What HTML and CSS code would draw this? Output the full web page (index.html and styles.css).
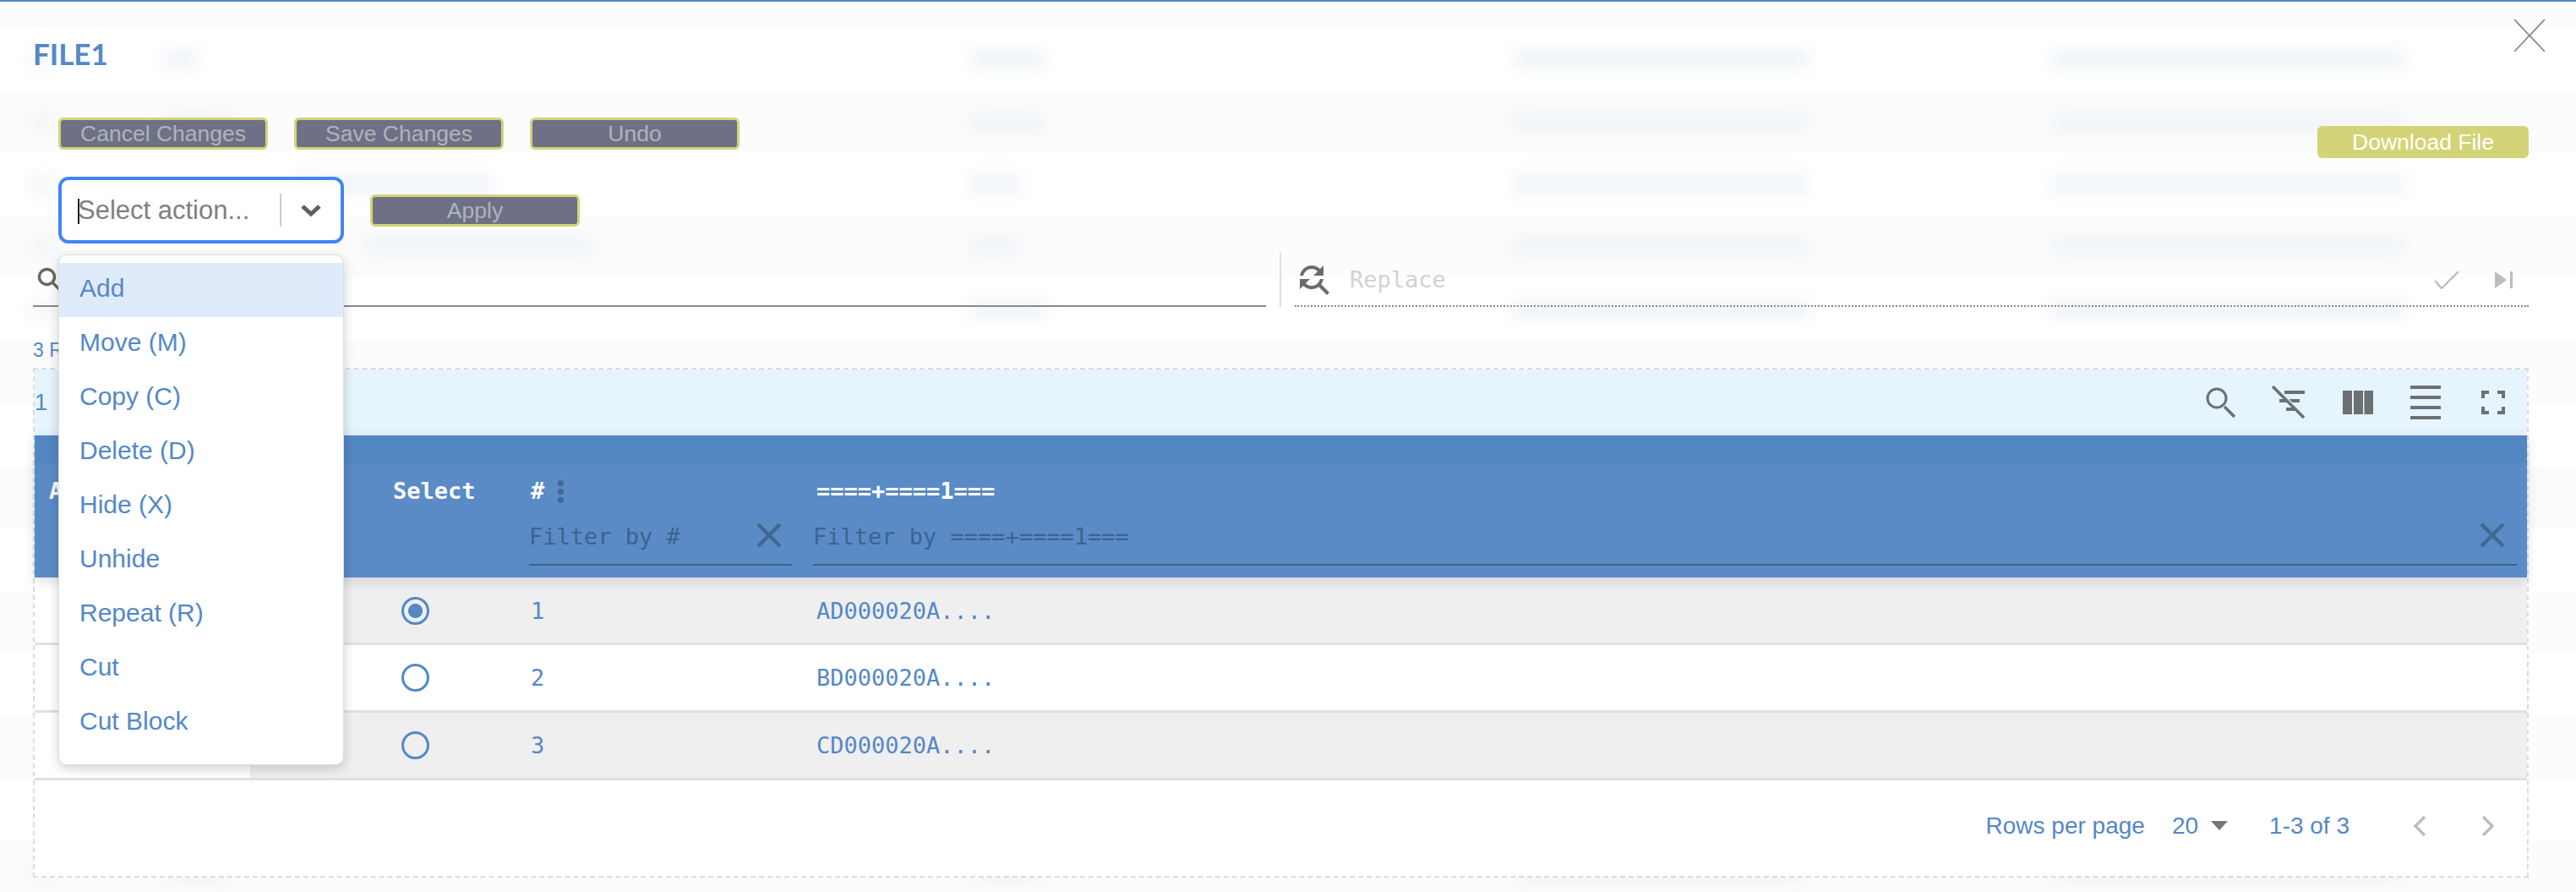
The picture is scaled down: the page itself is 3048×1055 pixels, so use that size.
FILE: index.html
```html
<!DOCTYPE html>
<html lang="en">
<head>
<meta charset="utf-8">
<title>FILE1</title>
<link rel="stylesheet" href="styles.css">
</head>
<body>
<div class="ghost" aria-hidden="true">
  <div class="g-head"></div>
  <div class="g-row"><i class="b c1"></i><i class="b w40"></i><i class="b w90"></i><i class="b w350"></i><i class="b w418"></i></div>
  <div class="g-row alt"><i class="b c1"></i><i class="b w80"></i><i class="b w90"></i><i class="b w350"></i><i class="b w418"></i></div>
  <div class="g-row"><i class="b c1"></i><i class="b w230"></i><i class="b w60"></i><i class="b w350"></i><i class="b w418"></i></div>
  <div class="g-row alt"><i class="b c1"></i><i class="b w270"></i><i class="b w60"></i><i class="b w350"></i><i class="b w418"></i></div>
  <div class="g-row"><i class="b c1"></i><i class="b w80"></i><i class="b w90"></i><i class="b w350"></i><i class="b w418"></i></div>
  <div class="g-row alt"></div>
  <div class="g-row"></div>
  <div class="g-row alt"></div>
  <div class="g-row"></div>
  <div class="g-row alt"></div>
  <div class="g-row"></div>
  <div class="g-row alt"></div>
  <div class="g-row"></div>
  <div class="g-row alt"><i class="b c1"></i><i class="b w80"></i><i class="b w90"></i><i class="b w350"></i><i class="b w418"></i></div>
</div>

<main class="modal">
  <header class="title-row">
    <h1 class="title">FILE1</h1>
    <button class="close" aria-label="Close">
      <svg viewBox="0 0 38 38" width="38" height="38"><path d="M1 0 19 19 37 0M1 38 19 19 37 38" fill="none" stroke="#808080" stroke-width="1.6"/></svg>
    </button>
  </header>

  <div class="actions">
    <button class="btn">Cancel Changes</button>
    <button class="btn">Save Changes</button>
    <button class="btn">Undo</button>
    <button class="btn-download">Download File</button>
  </div>

  <div class="apply-row">
    <div class="select">
      <span class="caret"></span>
      <span class="placeholder">Select action...</span>
      <span class="sep"></span>
      <svg class="chev" viewBox="0 0 24 16" width="24" height="16"><path d="M2 3 12 12 22 3" fill="none" stroke="#5f5f5f" stroke-width="5"/></svg>
    </div>
    <button class="btn">Apply</button>
  </div>

  <div class="search-row">
    <div class="find">
      <svg viewBox="0 0 28 28" width="28" height="28"><circle cx="11.5" cy="11.5" r="9" fill="none" stroke="#666" stroke-width="3.4"/><path d="M18 18 26 26" stroke="#666" stroke-width="3.4"/></svg>
    </div>
    <span class="vsep"></span>
    <div class="replace">
      <svg class="rep-icon" viewBox="3.5 3.5 18.5 18.5" width="37" height="37"><path fill="#6b6b6b" d="M11 6c1.38 0 2.63.56 3.54 1.46L12 10h6V4l-2.05 2.05C14.68 4.78 12.93 4 11 4c-3.53 0-6.43 2.61-6.92 6H6.1c.46-2.28 2.48-4 4.9-4zm5.64 9.14c.66-.9 1.12-1.97 1.28-3.14H15.9c-.46 2.28-2.48 4-4.9 4-1.38 0-2.63-.56-3.54-1.46L10 12H4v6l2.05-2.05C7.32 17.22 9.07 18 11 18c1.55 0 2.98-.51 4.14-1.36L20 21.49 21.49 20l-4.85-4.86z"/></svg>
      <span class="rep-text">Replace</span>
      <svg class="rep-check" viewBox="0 0 30 22" width="30" height="22"><path d="M1 12 9 21 29 1" fill="none" stroke="#bdbdbd" stroke-width="2.4"/></svg>
      <svg class="rep-next" viewBox="0 0 21 20" width="21" height="20"><path d="M0 0 14 10 0 20Z" fill="#bdbdbd"/><rect x="18" width="3" height="20" fill="#bdbdbd"/></svg>
    </div>
  </div>

  <p class="count">3 Rows</p>

  <section class="card">
    <div class="toolbar">
      <span class="selected">1</span>
      <div class="tools">
        <svg viewBox="0 0 36 36" width="36" height="36"><circle cx="13" cy="13" r="11" fill="none" stroke="#6c7073" stroke-width="3"/><path d="M22 23 34 35" stroke="#6c7073" stroke-width="3.6"/></svg>
        <svg viewBox="0 0 40 40" width="40" height="40"><path d="M15 6H39V10H15ZM9 16H33V20H9ZM17 26H27V30H17Z" fill="#6c7073"/><path d="M3 0 40 37" stroke="#e6f4fd" stroke-width="2"/><path d="M1 1 38 38" stroke="#6c7073" stroke-width="3.5"/></svg>
        <svg viewBox="0 0 36 28" width="36" height="28"><path d="M0 0H11V28H0ZM13 0H24V28H13ZM25.500 0H36V28H25.500Z" fill="#6c7073"/></svg>
        <svg viewBox="0 0 36 40" width="36" height="40"><path d="M0 0H36V4H0ZM0 12H36V16H0ZM0 24H36V28H0ZM0 36H36V40H0Z" fill="#6c7073"/></svg>
        <svg viewBox="0 0 28 28" width="28" height="28"><path d="M0 0H9V4H4V9H0ZM19 0H28V9H24V4H19ZM0 19H4V24H9V28H0ZM24 19H28V28H19V24H24Z" fill="#6c7073"/></svg>
      </div>
    </div>

    <div class="thead">
      <div class="thead-top"></div>
      <div class="tr head">
        <div class="col-action"><span class="th">Action</span></div>
        <div class="col-select"><span class="th">Select</span></div>
        <div class="col-num">
          <span class="th">#<i class="kebab"></i></span>
          <div class="filter"><span>Filter by #</span><svg viewBox="0 0 30 28" width="30" height="28"><path d="M2 1 28 27M28 1 2 27" stroke="#41688f" stroke-width="4.4"/></svg></div>
        </div>
        <div class="col-data">
          <span class="th">====+====1===</span>
          <div class="filter"><span>Filter by ====+====1===</span><svg viewBox="0 0 30 28" width="30" height="28"><path d="M2 1 28 27M28 1 2 27" stroke="#41688f" stroke-width="4.4"/></svg></div>
        </div>
      </div>
    </div>

    <div class="tr row grey first">
      <div class="col-action"></div>
      <div class="col-select"><span class="radio on"></span></div>
      <div class="col-num">1</div>
      <div class="col-data">AD000020A....</div>
    </div>
    <div class="tr row">
      <div class="col-action"></div>
      <div class="col-select"><span class="radio"></span></div>
      <div class="col-num">2</div>
      <div class="col-data">BD000020A....</div>
    </div>
    <div class="tr row grey">
      <div class="col-action"></div>
      <div class="col-select"><span class="radio"></span></div>
      <div class="col-num">3</div>
      <div class="col-data">CD000020A....</div>
    </div>

    <footer class="pager">
      <span class="rpp">Rows per page</span>
      <span class="size">20</span>
      <span class="tri"></span>
      <span class="range">1-3 of 3</span>
      <svg class="nav-l" viewBox="0 0 16 24" width="16" height="24"><path d="M14 1 3 12 14 23" fill="none" stroke="#bdbdbd" stroke-width="3.4"/></svg>
      <svg class="nav-r" viewBox="0 0 16 24" width="16" height="24"><path d="M2 1 13 12 2 23" fill="none" stroke="#bdbdbd" stroke-width="3.4"/></svg>
    </footer>
  </section>

  <ul class="menu">
    <li class="active">Add</li>
    <li>Move (M)</li>
    <li>Copy (C)</li>
    <li>Delete (D)</li>
    <li>Hide (X)</li>
    <li>Unhide</li>
    <li>Repeat (R)</li>
    <li>Cut</li>
    <li>Cut Block</li>
  </ul>
</main>
</body>
</html>
```
FILE: styles.css
```css
* { box-sizing: border-box; }
html, body { margin: 0; padding: 0; }
body {
  width: 3048px;
  height: 1055px;
  overflow: hidden;
  position: relative;
  background: #fff;
  font-family: "Liberation Sans", Arial, sans-serif;
  color: #5488c7;
}
button { font-family: inherit; cursor: pointer; padding: 0; }

/* blurred page behind the dialog */
.ghost { position: absolute; inset: 0; overflow: hidden; }
.g-head { height: 33px; background: #fcfcfc; }
.g-row {
  height: 74px;
  display: grid;
  grid-template-columns: 195px 952px 643px 637px 1fr;
  align-items: center;
  background: #fff;
}
.g-row.alt { background: #fcfcfc; }
.b { display: block; height: 22px; filter: blur(9px); background: #eff3f8; }
.c1 { width: 30px; margin-left: 36px; background: #f3f5f8; }
.w40 { width: 40px; }
.w80 { width: 80px; }
.w230 { width: 230px; margin-left: 155px; }
.w270 { width: 270px; margin-left: 235px; }
.w90 { width: 90px; }
.w60 { width: 60px; }
.w350 { width: 350px; }
.w418 { width: 418px; }

/* dialog */
.modal {
  position: relative;
  height: 1055px;
  border-top: 2px solid #5488c7;
  padding: 0 56px 0 39px;
}
.title-row { display: flex; justify-content: space-between; align-items: flex-start; height: 137px; padding-top: 21px; margin-right: -20px; }
.title { margin: 18px 0 0; font: 700 35px/44px Lato, sans-serif; color: #5488c7; }
.close { border: 0; background: none; width: 38px; height: 38px; }
.close svg { display: block; }

.actions { display: flex; gap: 31px; margin-left: 30px; height: 38px; }
.btn {
  width: 248px;
  height: 38px;
  background: #6e7185;
  border: 3px solid #d2d477;
  border-radius: 6px;
  color: #b0b3bd;
  font-size: 26.5px;
  line-height: 30px;
}
.btn-download {
  width: 250px;
  height: 38px;
  margin: 10px 0 0 auto;
  background: #d3d477;
  border: 0;
  border-radius: 6px;
  color: #fff;
  font-size: 26.5px;
}

.apply-row { display: flex; align-items: center; gap: 31px; margin: 32px 0 0 30px; height: 79px; }
.select {
  position: relative;
  width: 338px;
  height: 79px;
  background: #fff;
  border: 4px solid #4285f4;
  border-radius: 12px;
  display: flex;
  align-items: center;
  padding-left: 19px;
}
.caret { position: absolute; left: 19px; top: 22px; width: 2px; height: 30px; background: #222; }
.placeholder { width: 239px; font-size: 31px; color: #7f7f7f; white-space: nowrap; }
.sep { width: 2px; height: 39px; background: #ccc; }
.chev { margin-left: 23px; }

.search-row { display: flex; height: 64px; margin-top: 11px; }
.find {
  width: 1459px;
  height: 64px;
  border-bottom: 2px solid #8a8a8a;
  padding: 17px 0 0 5px;
}
.find svg { display: block; }
.vsep { width: 2px; height: 64px; margin-left: 16px; background: #dedede; }
.replace {
  position: relative;
  flex: 1;
  height: 64px;
  margin-left: 16px;
  border-bottom: 2px dotted #8a8a8a;
  display: flex;
  align-items: flex-start;
  padding: 14px 0 0 5px;
}
.rep-icon { display: block; }
.rep-text { margin: 2px 0 0 23px; font: 27px/32px "DejaVu Sans Mono", monospace; color: #d2d2d2; }
.rep-check { margin: 7px 0 0 auto; }
.rep-next { margin: 8px 19px 0 42px; }

.count { margin: 0; padding-top: 38px; height: 72px; font-size: 23px; line-height: 26px; }

.card {
  height: 603px;
  border: 2px dashed #dcdcdc;
  background: #fff;
  position: relative;
}
.toolbar {
  display: flex;
  align-items: center;
  justify-content: space-between;
  height: 78px;
  background: #e6f4fd;
  padding: 0 26px 0 0;
}
.selected { font-size: 27px; }
.tools { display: flex; align-items: center; gap: 44px; }
.tools svg { display: block; }
.tools svg:nth-child(2) { margin-left: -2px; }
.tools svg:nth-child(5) { margin-left: 4px; }

.thead { background: #5a8bc7; box-shadow: 0 4px 14px rgba(0,0,0,.13); position: relative; }
.thead-top { height: 33px; background: #5387c3; }
.tr { display: grid; grid-template-columns: 255px 332px 338px 1fr; font-family: "DejaVu Sans Mono", monospace; font-size: 27px; }
.tr.head { height: 135px; color: #fff; }
.th { display: block; margin-top: 17px; height: 36px; font-weight: 700; line-height: 32px; white-space: nowrap; }
.col-select .th { margin-left: 169px; }
.col-action .th { margin-left: 17px; }
.kebab {
  display: inline-block;
  width: 7px; height: 7px;
  margin-left: 16px;
  vertical-align: 15px;
  border-radius: 50%;
  background: #41688f;
  box-shadow: 0 10px 0 #41688f, 0 20px 0 #41688f;
}
.filter {
  display: flex;
  justify-content: space-between;
  align-items: flex-start;
  height: 52px;
  margin-top: 16px;
  margin-left: -4px;
  border-bottom: 2px solid #3c6088;
  color: #3b6391;
  line-height: 36px;
  white-space: nowrap;
}
.filter svg { display: block; margin: 2px 12px 0 0; }
.col-num .filter { width: 311px; margin-left: -2px; }
.col-data .filter { margin-right: 12px; }
.col-data .filter svg { margin-right: 14px; }

.tr.row {
  height: 80px;
  border-bottom: 3px solid #e0e0e0;
  align-items: center;
  color: #5488c7;
}
.tr.row > div { height: 77px; display: flex; align-items: center; }
.tr.row.first > div { padding-top: 2px; }
.tr.row.grey { background: #efefef; }
.tr.row.grey .col-action { background: #fff; }
.radio {
  display: block;
  width: 33px;
  height: 33px;
  margin-left: 179px;
  border: 3.5px solid #5488c7;
  border-radius: 50%;
}
.radio.on { background: radial-gradient(circle, #5488c7 0 8px, transparent 9px); }

.pager {
  display: flex;
  align-items: center;
  justify-content: flex-end;
  height: 113px;
  padding: 0 38px 6px 0;
  font-size: 28px;
}
.size { margin-left: 32px; }
.tri { width: 0; height: 0; margin-left: 15px; border: 10px solid transparent; border-top: 11px solid #777; border-bottom: 0; }
.range { margin-left: 49px; }
.nav-l { margin-left: 75px; }
.nav-r { margin-left: 65px; }

.menu {
  position: absolute;
  left: 69px;
  top: 299px;
  width: 338px;
  height: 604px;
  margin: 0;
  padding: 9px 0 0;
  list-style: none;
  background: #fff;
  border: 1px solid #ddd;
  border-radius: 10px;
  box-shadow: 0 4px 14px rgba(0,0,0,.18);
  font-size: 30px;
}
.menu li { height: 64px; line-height: 60px; padding-left: 24px; white-space: nowrap; }
.menu li.active { background: #dfeafb; }
```
